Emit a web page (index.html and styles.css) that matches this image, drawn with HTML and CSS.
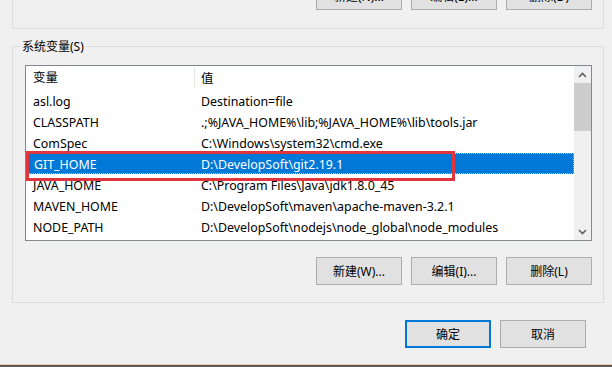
FILE: index.html
```html
<!DOCTYPE html>
<html lang="zh-CN">
<head>
    <meta charset="UTF-8">
    <meta name="viewport" content="width=device-width, initial-scale=1.0">
    <title>环境变量</title>
    <link rel="stylesheet" href="styles.css">
</head>
<body>
    <div class="dialog">
        <div class="group-top">
            <div class="btn-row">
                <button class="btn">新建(N)...</button>
                <button class="btn">编辑(E)...</button>
                <button class="btn">删除(D)</button>
            </div>
        </div>

        <fieldset class="group-sys">
            <legend>系统变量(S)</legend>
            <div class="list">
                <div class="list-body">
                    <div class="list-head">
                        <span class="col-name">变量</span>
                        <span class="col-value">值</span>
                    </div>
                    <div class="row"><span class="col-name">asl.log</span><span class="col-value">Destination=file</span></div>
                    <div class="row"><span class="col-name">CLASSPATH</span><span class="col-value">.;%JAVA_HOME%\lib;%JAVA_HOME%\lib\tools.jar</span></div>
                    <div class="row"><span class="col-name">ComSpec</span><span class="col-value">C:\Windows\system32\cmd.exe</span></div>
                    <div class="row selected"><span class="col-name">GIT_HOME</span><span class="col-value">D:\DevelopSoft\git2.19.1</span></div>
                    <div class="row"><span class="col-name">JAVA_HOME</span><span class="col-value">C:\Program Files\Java\jdk1.8.0_45</span></div>
                    <div class="row"><span class="col-name">MAVEN_HOME</span><span class="col-value">D:\DevelopSoft\maven\apache-maven-3.2.1</span></div>
                    <div class="row"><span class="col-name">NODE_PATH</span><span class="col-value">D:\DevelopSoft\nodejs\node_global\node_modules</span></div>
                    <div class="highlight"></div>
                </div>
                <div class="scrollbar">
                    <div class="arrow">
                        <svg width="9" height="6" viewBox="0 0 9 6"><path d="M1 5 L4.5 1.5 L8 5" fill="none" stroke="#606060" stroke-width="1.6"/></svg>
                    </div>
                    <div class="track"><div class="thumb"></div></div>
                    <div class="arrow">
                        <svg width="9" height="6" viewBox="0 0 9 6"><path d="M1 1 L4.5 4.5 L8 1" fill="none" stroke="#606060" stroke-width="1.6"/></svg>
                    </div>
                </div>
            </div>
            <div class="btn-row sys-buttons">
                <button class="btn">新建(W)...</button>
                <button class="btn">编辑(I)...</button>
                <button class="btn">删除(L)</button>
            </div>
        </fieldset>

        <div class="dialog-foot">
            <button class="btn btn-default">确定</button>
            <button class="btn">取消</button>
        </div>

        <div class="taskbar"></div>
    </div>
</body>
</html>
```

FILE: styles.css
```css
* {
    box-sizing: border-box;
}

body {
    margin: 0;
    background: #f0f0f0;
    font-family: "Noto Sans", "Noto Sans CJK SC", sans-serif;
    font-size: 12px;
    color: #000;
}

.dialog {
    height: 367px;
    display: flex;
    flex-direction: column;
    overflow: hidden;
}

.group-top {
    margin-left: 12px;
    width: 592px;
    height: 29px;
    border: 1px solid #dcdcdc;
    border-top: none;
    padding-right: 11px;
}

.group-top .btn-row {
    margin-top: -18px;
}

.btn-row {
    display: flex;
    justify-content: flex-end;
    gap: 9px;
}

.btn {
    width: 86px;
    height: 28px;
    padding: 0;
    background: #e1e1e1;
    border: 1px solid #adadad;
    font-family: inherit;
    font-size: 12px;
    color: #000;
}

.btn-default {
    border: 2px solid #0078d7;
}

.group-sys {
    margin: 9px 0 0 12px;
    width: 592px;
    padding: 10px 11px 17px 12px;
    border: 1px solid #dcdcdc;
    min-width: 0;
}

.group-sys legend {
    padding: 0 2px;
    margin-left: -5px;
    line-height: 17px;
}

.list {
    width: 567px;
    height: 176px;
    border: 1px solid #828790;
    background: #fff;
    display: flex;
    font-size: 12.4px;
}

.list-body {
    flex: 1;
    position: relative;
}

.list-head {
    height: 24px;
    display: flex;
    align-items: center;
}

.list-head .col-name {
    border-right: 1px solid #e5e5e5;
    height: 20px;
    line-height: 20px;
}

.row {
    height: 21px;
    display: flex;
    align-items: center;
    white-space: nowrap;
    padding-top: 2px;
}

.col-name {
    width: 169px;
    padding-left: 7px;
}

.col-value {
    padding-left: 6px;
}

.row.selected {
    background: #0078d7;
    color: #fff;
    outline: 1px dotted #9fcaf0;
    outline-offset: -1px;
    margin-left: 1px;
}

.row.selected .col-name {
    width: 168px;
}

.highlight {
    position: absolute;
    left: 0;
    top: 85px;
    width: 429px;
    height: 30px;
    border: 3px solid #e0353d;
}

.scrollbar {
    width: 17px;
    display: flex;
    flex-direction: column;
    background: #f0f0f0;
}

.arrow {
    height: 17px;
    display: flex;
    align-items: center;
    justify-content: center;
}

.track {
    flex: 1;
}

.thumb {
    height: 48px;
    background: #cdcdcd;
}

.sys-buttons {
    margin-top: 16px;
}

.dialog-foot {
    display: flex;
    justify-content: flex-end;
    gap: 9px;
    margin-top: 17px;
    padding-right: 26px;
}

.taskbar {
    margin-top: auto;
    height: 3px;
    border-top: 1px solid #e9c9a4;
    background: #5a5a5a;
}
```
